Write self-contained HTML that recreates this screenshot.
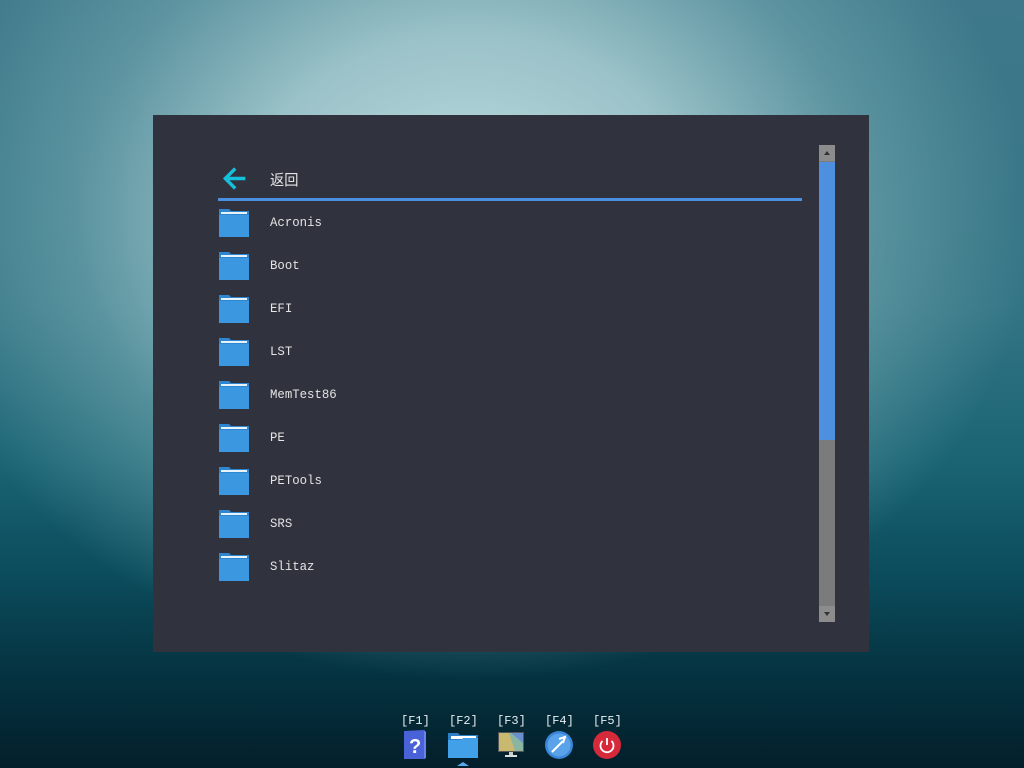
<!DOCTYPE html>
<html><head><meta charset="utf-8"><style>
html,body{margin:0;padding:0;width:1024px;height:768px;overflow:hidden}
body{position:relative;font-family:"Liberation Mono","Noto Sans CJK SC",monospace;
background:
radial-gradient(ellipse 560px 460px at 470px 220px, rgba(190,224,227,1) 0%, rgba(165,202,207,0.9) 40%, rgba(120,172,180,0.55) 70%, rgba(60,120,135,0) 100%),
linear-gradient(180deg,#3e788a 0%,#347585 40%,#1a6474 60%,#0b4c5c 75%,#053240 88%,#031f2b 100%);}
.panel{position:absolute;left:153px;top:115px;width:716px;height:537px;background:#30333e}
.row{position:absolute;left:65px;height:30px;color:#e4e4e4;font-size:13px}
.row .t{position:absolute;left:52px;top:7px;white-space:nowrap;transform:scaleX(0.95);transform-origin:left}
.fold{position:absolute;left:1px;top:0;width:30px;height:29px}
.line{position:absolute;left:65px;top:83px;width:584px;height:3px;background:#4a8fe0}
.sb{position:absolute;left:666px;top:30px;width:16px;height:477px;background:#7b7b7b}
.btn{position:absolute;left:0;width:16px;height:16px;background:#8c8c8c}
.thumb{position:absolute;left:0;top:17px;width:16px;height:278px;background:#4f8fe0}
.dock{position:absolute;top:714px;color:#e8eef0;font-size:12px;font-family:"Liberation Mono",monospace}
</style></head><body>
<div class="panel">
 <div class="row" style="top:48px">
  <svg class="fold" viewBox="0 0 30 30" style="left:2px;top:1px"><path d="M24 15H6M14 6l-9 9 9 9" stroke="#14c0dc" stroke-width="3.5" fill="none" stroke-linecap="square"/></svg>
  <span class="t" style="top:6px;font-size:15px">返回</span>
 </div>
 <div class="line"></div>
 <div class="row" style="top:93px"><svg class="fold" viewBox="0 0 30 29"><path d="M0 1h10l2 2h18v26H0z" fill="#2f86d0"/><rect x="2" y="4" width="26" height="2" fill="#e8f2fa"/><rect x="0" y="7" width="30" height="22" fill="#3a97e0"/></svg><span class="t">Acronis</span></div>
 <div class="row" style="top:136px"><svg class="fold" viewBox="0 0 30 29"><path d="M0 1h10l2 2h18v26H0z" fill="#2f86d0"/><rect x="2" y="4" width="26" height="2" fill="#e8f2fa"/><rect x="0" y="7" width="30" height="22" fill="#3a97e0"/></svg><span class="t">Boot</span></div>
 <div class="row" style="top:179px"><svg class="fold" viewBox="0 0 30 29"><path d="M0 1h10l2 2h18v26H0z" fill="#2f86d0"/><rect x="2" y="4" width="26" height="2" fill="#e8f2fa"/><rect x="0" y="7" width="30" height="22" fill="#3a97e0"/></svg><span class="t">EFI</span></div>
 <div class="row" style="top:222px"><svg class="fold" viewBox="0 0 30 29"><path d="M0 1h10l2 2h18v26H0z" fill="#2f86d0"/><rect x="2" y="4" width="26" height="2" fill="#e8f2fa"/><rect x="0" y="7" width="30" height="22" fill="#3a97e0"/></svg><span class="t">LST</span></div>
 <div class="row" style="top:265px"><svg class="fold" viewBox="0 0 30 29"><path d="M0 1h10l2 2h18v26H0z" fill="#2f86d0"/><rect x="2" y="4" width="26" height="2" fill="#e8f2fa"/><rect x="0" y="7" width="30" height="22" fill="#3a97e0"/></svg><span class="t">MemTest86</span></div>
 <div class="row" style="top:308px"><svg class="fold" viewBox="0 0 30 29"><path d="M0 1h10l2 2h18v26H0z" fill="#2f86d0"/><rect x="2" y="4" width="26" height="2" fill="#e8f2fa"/><rect x="0" y="7" width="30" height="22" fill="#3a97e0"/></svg><span class="t">PE</span></div>
 <div class="row" style="top:351px"><svg class="fold" viewBox="0 0 30 29"><path d="M0 1h10l2 2h18v26H0z" fill="#2f86d0"/><rect x="2" y="4" width="26" height="2" fill="#e8f2fa"/><rect x="0" y="7" width="30" height="22" fill="#3a97e0"/></svg><span class="t">PETools</span></div>
 <div class="row" style="top:394px"><svg class="fold" viewBox="0 0 30 29"><path d="M0 1h10l2 2h18v26H0z" fill="#2f86d0"/><rect x="2" y="4" width="26" height="2" fill="#e8f2fa"/><rect x="0" y="7" width="30" height="22" fill="#3a97e0"/></svg><span class="t">SRS</span></div>
 <div class="row" style="top:437px"><svg class="fold" viewBox="0 0 30 29"><path d="M0 1h10l2 2h18v26H0z" fill="#2f86d0"/><rect x="2" y="4" width="26" height="2" fill="#e8f2fa"/><rect x="0" y="7" width="30" height="22" fill="#3a97e0"/></svg><span class="t">Slitaz</span></div>
 <div class="sb">
  <div class="btn" style="top:0"><svg width="16" height="16"><path d="M5 10h6L8 6z" fill="#333"/></svg></div>
  <div class="thumb"></div>
  <div class="btn" style="top:461px"><svg width="16" height="16"><path d="M5 6h6L8 10z" fill="#333"/></svg></div>
 </div>
</div>
<div class="dock" style="left:401px">[F1]</div>
<div class="dock" style="left:449px">[F2]</div>
<div class="dock" style="left:497px">[F3]</div>
<div class="dock" style="left:545px">[F4]</div>
<div class="dock" style="left:593px">[F5]</div>
<svg style="position:absolute;left:403px;top:729px" width="24" height="32"><path d="M1 2l20-1v29L1 30z" fill="#4a62d8"/><path d="M21 1l2 2v26l-2 1z" fill="#6a84ee"/><text x="6" y="24" fill="#fff" font-size="20" font-weight="bold" font-family="Liberation Sans">?</text></svg>
<svg style="position:absolute;left:447px;top:731px" width="32" height="37"><path d="M1 2h10l2 2h18v23H1z" fill="#2d7fc6"/><rect x="4" y="5" width="25" height="3" fill="#fff"/><path d="M1 9h13l2-2h15v20H1z" fill="#41a0e8"/><path d="M10 35l6-4 6 4z" fill="#5aa8f0"/></svg>
<svg style="position:absolute;left:497px;top:731px" width="28" height="27"><rect x="1" y="1" width="26" height="20" fill="#555"/><rect x="2" y="2" width="24" height="18" fill="#8ab5a0"/><path d="M2 2h10l6 18H2z" fill="#c8b870"/><path d="M14 2h12v10z" fill="#6a8fd0"/><rect x="12" y="21" width="4" height="3" fill="#ccc"/><rect x="8" y="24" width="12" height="2" fill="#ddd"/></svg>
<svg style="position:absolute;left:544px;top:730px" width="30" height="30"><circle cx="15" cy="15" r="14" fill="#3a86d8"/><circle cx="15" cy="15" r="11.5" fill="#5aa2ea"/><path d="M8 22l11-11M15 9l6-2-2 6" stroke="#fff" stroke-width="2" fill="none"/></svg>
<svg style="position:absolute;left:592px;top:730px" width="30" height="30"><circle cx="15" cy="15" r="14" fill="#d62a3a"/><path d="M10.5 11a6.5 6.5 0 1 0 9 0" stroke="#fff" stroke-width="1.8" fill="none"/><path d="M15 8v7" stroke="#fff" stroke-width="1.8"/></svg>
</body></html>
